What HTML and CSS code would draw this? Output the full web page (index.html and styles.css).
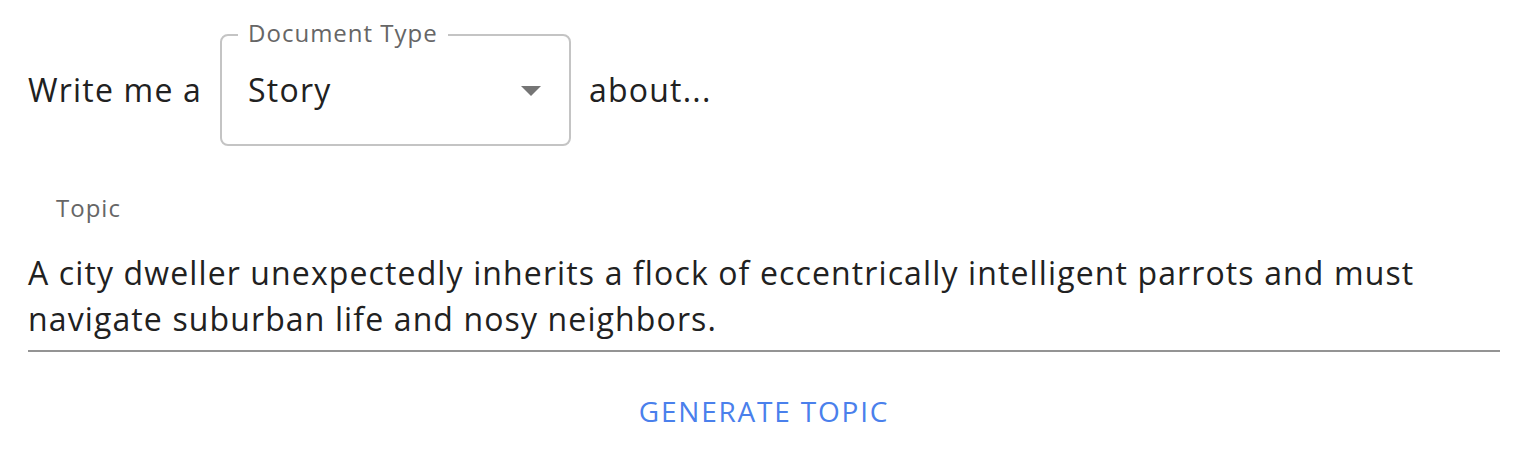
FILE: index.html
```html
<!DOCTYPE html>
<html lang="en">
<head>
<meta charset="utf-8">
<title>Write me a story</title>
<link rel="stylesheet" href="styles.css">
</head>
<body>
<main class="page">
  <div class="prompt-row">
    <span class="prompt-text">Write me a</span>
    <div class="select-field">
      <span class="select-label">Document Type</span>
      <div class="select-box">
        <span class="select-value">Story</span>
        <svg class="select-icon" viewBox="0 0 24 24" width="48" height="48" aria-hidden="true"><path d="M7 10l5 5 5-5z"/></svg>
      </div>
    </div>
    <span class="prompt-text">about...</span>
  </div>

  <div class="topic-field">
    <label class="topic-label">Topic</label>
    <div class="topic-input">A city dweller unexpectedly inherits a flock of eccentrically intelligent parrots and must navigate suburban life and nosy neighbors.</div>
  </div>

  <div class="actions">
    <button class="text-button" type="button">Generate Topic</button>
  </div>
</main>
</body>
</html>
```

FILE: styles.css
```css
html, body {
  margin: 0;
  padding: 0;
  background: #ffffff;
}

.page {
  font-family: "Open Sans", "Liberation Sans", sans-serif;
  color: #212121;
  padding: 34px 28px 0 28px;
}

.prompt-row {
  display: flex;
  align-items: center;
  gap: 18px;
  height: 112px;
}

.prompt-text {
  font-size: 32px;
  letter-spacing: 1.2px;
  line-height: 46px;
}

.select-field {
  position: relative;
  width: 351px;
  height: 112px;
}

.select-box {
  box-sizing: border-box;
  height: 112px;
  border: 2px solid #c4c4c4;
  border-radius: 8px;
  display: flex;
  align-items: center;
  padding: 0 14px 0 26px;
}

.select-value {
  flex: 1;
  font-size: 32px;
  letter-spacing: 1.2px;
  line-height: 46px;
}

.select-icon {
  fill: #757575;
  flex: none;
}

.select-label {
  position: absolute;
  top: -13px;
  left: 18px;
  padding: 0 10px;
  background: #ffffff;
  font-size: 24px;
  line-height: 24px;
  letter-spacing: 1px;
  color: #666666;
}

.topic-field {
  margin-top: 50px;
}

.topic-label {
  display: block;
  font-size: 24px;
  line-height: 24px;
  letter-spacing: 1px;
  color: #666666;
  padding-left: 28px;
}

.topic-input {
  margin-top: 30px;
  font-size: 32px;
  letter-spacing: 1.12px;
  line-height: 46px;
  padding-bottom: 8px;
  border-bottom: 2px solid #949494;
}

.actions {
  display: flex;
  justify-content: center;
  margin-top: 33px;
}

.text-button {
  border: 0;
  background: transparent;
  padding: 12px 16px;
  font-family: "Open Sans", "Liberation Sans", sans-serif;
  font-size: 28px;
  font-weight: 500;
  line-height: 28px;
  letter-spacing: 1.8px;
  text-transform: uppercase;
  color: #4a80ec;
  cursor: pointer;
}
```
